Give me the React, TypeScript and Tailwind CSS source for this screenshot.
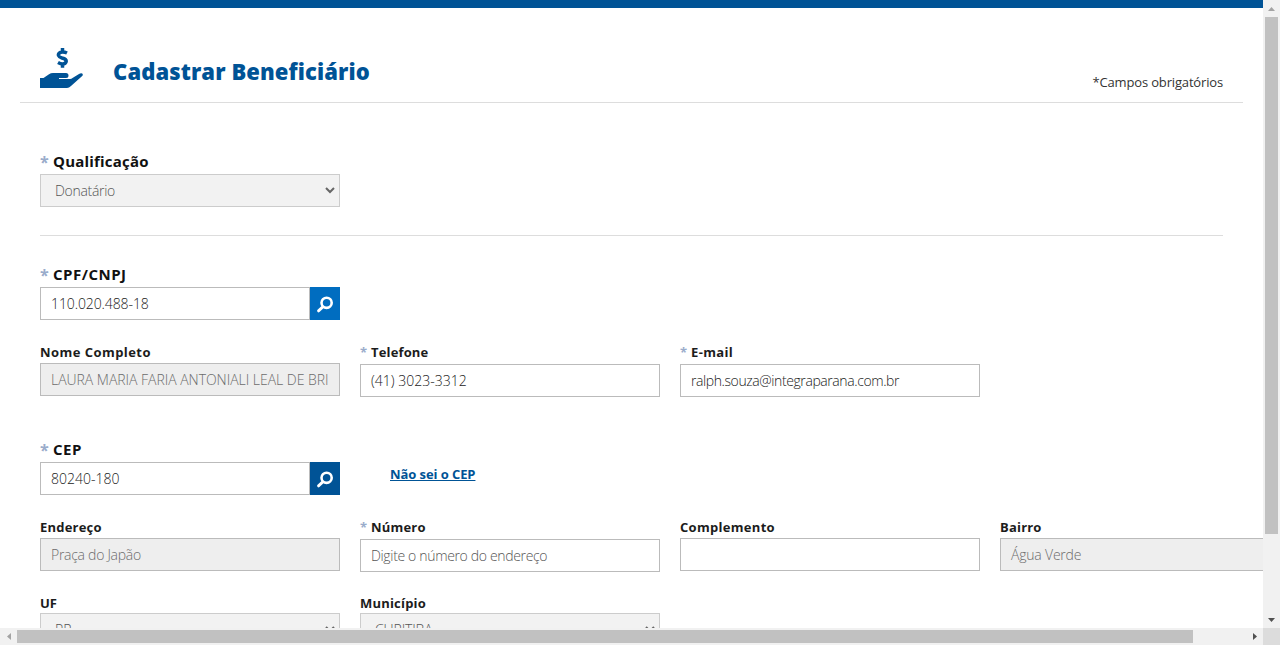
import type { ReactNode } from "react";

function Label({ text, cls = "", required = false, big = false, gap = "pb-px" }: { text: string; cls?: string; required?: boolean; big?: boolean; gap?: string }) {
  return (
    <div className={gap}>
      <label className={`flex h-5 items-center whitespace-nowrap font-bold ${big ? "text-[15px] text-[#111]" : "pt-0.5 text-[13px] text-[#1c1c1c]"}`}>
        {required && <span className={`shrink-0 text-[#9aaccb] ${big ? "w-[13px] pt-px text-[16px]" : "w-[11px] text-[13px]"}`}>*</span>}
        <span className={cls}>{text}</span>
      </label>
    </div>
  );
}

function Box({ children, disabled = false, cls = "text-[#222]" }: { children?: ReactNode; disabled?: boolean; cls?: string }) {
  return (
    <div className={`flex h-[33px] w-[300px] items-center overflow-hidden whitespace-nowrap border border-[#bbb] pl-2.5 text-[14px] font-light ${disabled ? "bg-[#eee] text-[#6c6c6c]" : "bg-white text-[#222]"}`}>
      <span className={cls}>{children}</span>
    </div>
  );
}

function Select({ value, cls = "" }: { value: string; cls?: string }) {
  return (
    <div className="flex h-[33px] w-[300px] items-center justify-between border border-[#ccc] bg-[#f2f2f2] pr-1 pl-3.5 text-[14px] font-light text-[#555]">
      <span className={cls}>{value}</span>
      <svg width="10" height="7" viewBox="0 0 10 7"><path d="M1 1l4 4 4-4" fill="none" stroke="#666" strokeWidth="2" /></svg>
    </div>
  );
}

function Search({ value, color, cls }: { value: string; color: string; cls: string }) {
  return (
    <div className="flex h-[33px] w-[300px]">
      <div className="flex w-[270px] items-center border border-[#bbb] pl-2.5 text-[14px] font-light text-[#222]"><span className={cls}>{value}</span></div>
      <button className={`flex w-[30px] items-center justify-center ${color}`}>
        <svg width="18" height="18" viewBox="0 0 18 18" fill="none" stroke="#fff"><circle cx="10.6" cy="7.8" r="5.1" strokeWidth="2.6" /><path d="M6.800 11.900l-4.300 4" strokeWidth="2.800" strokeLinecap="round" /></svg>
      </button>
    </div>
  );
}

export default function App() {
  return (
    <div className="h-[645px] w-[1280px] overflow-hidden bg-white font-['Open_Sans',sans-serif]">
      <div className="flex h-[628px]">
        <main className="h-[628px] w-[1263px] overflow-hidden">
          <div className="h-2 bg-[#005396]" />
          <header className="mx-5 flex h-[95px] items-start border-b border-[#ddd] px-5 pt-10">
            <svg width="43" height="40" viewBox="0 0 43 40" fill="#005396">
              <path d="M0 30h3.500L9 26.300q1.800-1.300 4-1.300H26q2.500 0 2.500 2.500T26 30h-7v1h11q1.500 0 2.500-1l6.500-4q1.800-1.200 3.200-.5 1.200 1 0 2.500L31 38q-2 2-4 2H0z" />
              <path d="M27 5Q23.500 3.300 20.500 4.300 18 5.500 18.500 7.500 19 9 22 10q4.500 1 4.200 3.500-.7 2.500-3.500 2.400-2.200 0-4.700-1.400M22.500 0v4M22.500 15.500v4.300" fill="none" stroke="#005396" strokeWidth="3.500" />
            </svg>
            <h1 className="ml-[30px] mt-[5px] whitespace-nowrap text-[22px] leading-9 font-extrabold tracking-[0.1px] text-[#005396]">Cadastrar Beneficiário</h1>
            <span className="ml-auto mt-6 whitespace-nowrap text-[13px] leading-5 tracking-[-0.16px] text-[#333]">*Campos obrigatórios</span>
          </header>
          <form className="w-[1340px] pt-12 pl-10">
            <Label text="Qualificação" required big gap="pb-[3px]" cls="tracking-[0.2px]" />
            <Select value="Donatário" cls="tracking-[-0.3px]" />
            <hr className="mt-7 mb-7 w-[1183px] border-t border-[#ddd]" />
            <Label text="CPF/CNPJ" required big gap="pb-[3px]" cls="tracking-[0.5px]" />
            <Search value="110.020.488-18" color="bg-[#006dc0]" cls="tracking-[-0.1px]" />
            <div className="mt-[22px] flex h-[55px] gap-5">
              <div><Label text="Nome Completo" cls="tracking-[0.45px]" /><Box disabled cls="tracking-[-0.03px]">LAURA MARIA FARIA ANTONIALI LEAL DE BRI</Box></div>
              <div><Label text="Telefone" required gap="pb-0.5" cls="tracking-[0.15px]" /><Box>(41) 3023-3312</Box></div>
              <div><Label text="E-mail" required gap="pb-0.5" cls="tracking-[0.35px]" /><Box cls="tracking-[-0.41px]">ralph.souza@integraparana.com.br</Box></div>
            </div>
            <div className="mt-[42px] flex gap-[50px]">
              <div><Label text="CEP" required big gap="pb-[3px]" cls="tracking-[0.5px]" /><Search value="80240-180" color="bg-[#005396]" cls="" /></div>
              <a className="mt-[25px] h-5 whitespace-nowrap text-[13px] leading-5 font-bold tracking-[-0.08px] text-[#005396] underline">Não sei o CEP</a>
            </div>
            <div className="mt-[22px] flex h-[55px] gap-5">
              <div><Label text="Endereço" cls="tracking-[0.2px]" /><Box disabled cls="tracking-[-0.28px]">Praça do Japão</Box></div>
              <div><Label text="Número" required gap="pb-0.5" cls="tracking-[0.2px]" /><Box cls="tracking-[-0.34px] text-[#555]">Digite o número do endereço</Box></div>
              <div><Label text="Complemento" cls="tracking-[0.3px]" /><Box /></div>
              <div><Label text="Bairro" cls="tracking-[0.2px]" /><Box disabled cls="tracking-[-0.2px]">Água Verde</Box></div>
            </div>
            <div className="mt-[21px] flex gap-5">
              <div><Label text="UF" gap="" /><Select value="PR" /></div>
              <div><Label text="Município" gap="" cls="tracking-[0.2px]" /><Select value="CURITIBA" cls="tracking-[-0.15px]" /></div>
            </div>
          </form>
        </main>
        <div className="flex w-[17px] flex-col items-center bg-[#f1f1f1]">
          <div className="flex h-[17px] items-center justify-center"><svg width="7" height="4"><path d="M0 4L3.500 0 7 4z" fill="#a3a3a3" /></svg></div>
          <div className="h-[517px] w-[13px] bg-[#c1c1c1]" />
          <div className="mt-auto flex h-[17px] items-center justify-center"><svg width="7" height="4"><path d="M0 0h7L3.500 4z" fill="#505050" /></svg></div>
        </div>
      </div>
      <div className="flex h-[17px] items-center bg-[#f1f1f1]">
        <div className="flex w-[17px] justify-center"><svg width="4" height="7"><path d="M4 0L0 3.500 4 7z" fill="#a3a3a3" /></svg></div>
        <div className="h-[13px] w-[1176px] bg-[#c1c1c1]" />
        <div className="ml-auto flex w-[17px] justify-center"><svg width="4" height="7"><path d="M0 0l4 3.500L0 7z" fill="#505050" /></svg></div>
        <div className="h-[17px] w-[17px] bg-[#dcdcdc]" />
      </div>
    </div>
  );
}
